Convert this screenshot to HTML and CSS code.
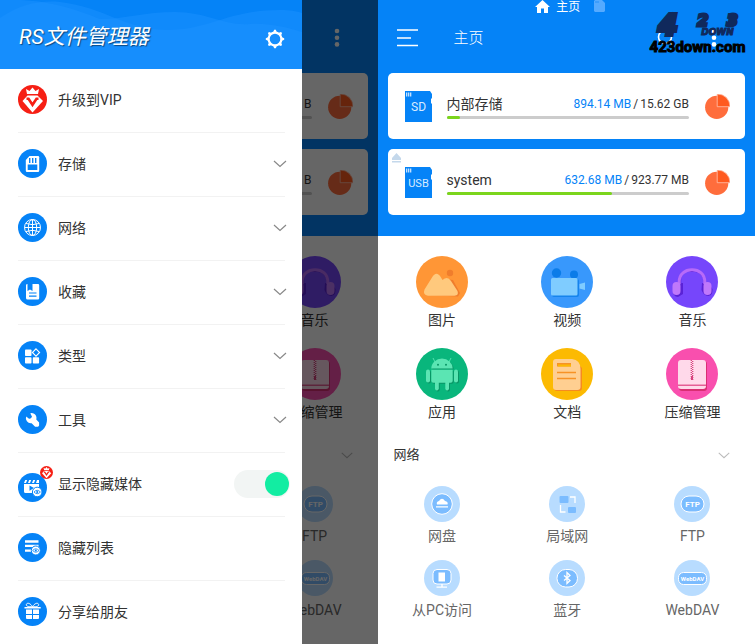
FILE: index.html
```html
<!DOCTYPE html>
<html lang="zh-CN">
<head>
<meta charset="utf-8">
<meta name="viewport" content="width=device-width, initial-scale=1">
<title>RS文件管理器</title>
<link rel="stylesheet" href="styles.css">
</head>
<body>
<svg class="sprite" aria-hidden="true">
  <symbol id="chevron" viewBox="0 0 16 10"><path d="M2 2l6 5.500 6-5.500" fill="none" stroke="currentColor" stroke-width="1.200"/></symbol>
  <symbol id="kebab" viewBox="0 0 6 20"><g fill="currentColor"><circle cx="3" cy="3" r="2.300"/><circle cx="3" cy="9.700" r="2.300"/><circle cx="3" cy="16.400" r="2.300"/></g></symbol>
  <symbol id="pie" viewBox="0 0 25 25"><circle cx="11.700" cy="13.300" r="11.600" fill="#ff6d3c"/><path d="M12.200 0A12.500 12.500 0 0 1 25 12.700H12.200z" fill="#ff5a1f" stroke="#ffc3ae" stroke-width=".8"/></symbol>
  <symbol id="music" viewBox="0 0 52 52"><circle cx="26" cy="26" r="26" fill="#7646fb"/><path d="M14.500 28c-1-17 6-12 12-13 9 0 12 5 12.500 13" fill="none" stroke="#5a22d6" stroke-width="1.500"/><path d="M15.500 27h1.500v11l-5 3c-3 0-5-3-5-5zM36 27l7 1 3.500 5c0 5-1 6-4 7-3 0-6-3-7-6z" fill="#5a22d6"/><path d="M13.200 28v-2C13.200 18 19 13.800 26 13.800S38.800 18 38.800 26v2" fill="none" stroke="#b76bf8" stroke-width="3"/><rect x="6.500" y="26" width="8" height="13" rx="4" fill="#bf78fb"/><rect x="37.500" y="26" width="8" height="13" rx="4" fill="#bf78fb"/></symbol>
  <symbol id="zip" viewBox="0 0 52 52"><circle cx="26" cy="26" r="26" fill="#f94fae"/><rect x="13" y="13" width="28" height="30" rx="3" fill="#d92f73"/><rect x="12" y="12" width="28" height="29" rx="3" fill="#ffd9ea"/><path d="M12 37.200h28" stroke="#df3f80" stroke-width="1.200"/><path d="M25.300 12v20M26.700 13v19" stroke="#d8417d" stroke-width="1.300" stroke-dasharray="1 1"/><path d="M26 28v4" stroke="#d8417d" stroke-width="2"/></symbol>
  <symbol id="vip" viewBox="0 0 29 29"><circle cx="14.500" cy="14.500" r="14.500" fill="#f61f14"/><path d="M9 9L8 4l3.500 2L14.500 2.500l3 3.500L21 4l-1 5z" fill="#fff"/><path d="M9.500 10.500h10L25 16 14.500 27.500 4.500 16z" fill="#fff"/><path d="M8.500 13.800h2l4 6 4-6h2" fill="none" stroke="#f61f14" stroke-width="2.600"/></symbol>
</svg>

<main class="screens">
  <section class="screen screen-drawer">
    <aside class="drawer">
      <header class="drawer-head">
        <svg class="waves" viewBox="0 0 302 69" preserveAspectRatio="none" aria-hidden="true"><path d="M0 18C20 4 42 0 60 2c45 5 65 28 108 28 42 0 60-20 112-20 10 0 16 1 22 3v56H0z"/><path d="M0 0c45-2 75 9 100 19 25 0 45-7 75-7 32 0 48 14 75 12 20-1 35 3 52 8v37H0z"/></svg>
        <h1>RS文件管理器</h1>
        <button class="icon-button" aria-label="设置">
          <svg width="20" height="20" viewBox="0 0 20 20"><circle cx="10" cy="10" r="6.400" fill="none" stroke="#fff" stroke-width="2.200"/><g fill="#fff"><path id="tooth" d="M8 3.500L9.200.8h1.600L12 3.500z"/><use href="#tooth" transform="rotate(45 10 10)"/><use href="#tooth" transform="rotate(90 10 10)"/><use href="#tooth" transform="rotate(135 10 10)"/><use href="#tooth" transform="rotate(180 10 10)"/><use href="#tooth" transform="rotate(225 10 10)"/><use href="#tooth" transform="rotate(270 10 10)"/><use href="#tooth" transform="rotate(315 10 10)"/></g></svg>
        </button>
      </header>
      <ul class="menu">
        <li><button class="menu-row"><svg class="menu-icon" viewBox="0 0 29 29"><use href="#vip"/></svg><span>升级到VIP</span></button></li>
        <li><button class="menu-row"><svg class="menu-icon" viewBox="0 0 29 29"><circle class="disc" cx="14.500" cy="14.500" r="14.500"/><path d="M11.500 7H20a1.200 1.200 0 0 1 1.200 1.200v13.600A1.200 1.200 0 0 1 20 23H9a1.200 1.200 0 0 1-1.200-1.200V11z" fill="#fff"/><path class="disc" d="M11 9h1.400v5H11zM14 9h1.400v5H14zM17 9h1.400v5H17zM9.700 15.500h9.600V21H9.700z"/></svg><span>存储</span><svg class="chevron"><use href="#chevron"/></svg></button></li>
        <li><button class="menu-row"><svg class="menu-icon" viewBox="0 0 29 29"><circle class="disc" cx="14.500" cy="14.500" r="14.500"/><g fill="none" stroke="#fff"><circle cx="14.500" cy="14.500" r="8"/><ellipse cx="14.500" cy="14.500" rx="4.200" ry="8"/><path d="M14.500 6.500v16M6.500 14.500h16M8 10.500q6.500 2.400 13 0M8 18.500q6.500-2.400 13 0"/></g></svg><span>网络</span><svg class="chevron"><use href="#chevron"/></svg></button></li>
        <li><button class="menu-row"><svg class="menu-icon" viewBox="0 0 29 29"><circle class="disc" cx="14.500" cy="14.500" r="14.500"/><path d="M8 8.200Q8 7 9.500 7v7l2.500-1.500 2.500 1.500V7H20q1.200 0 1.200 1.200v13.100q0 1.200-1.200 1.200H9.500Q8 22.500 8 21z" fill="#fff"/><path d="M11 16h7.500M11 19.200h7.500" stroke="#0583f7" stroke-width="1.200"/></svg><span>收藏</span><svg class="chevron"><use href="#chevron"/></svg></button></li>
        <li><button class="menu-row"><svg class="menu-icon" viewBox="0 0 29 29"><circle class="disc" cx="14.500" cy="14.500" r="14.500"/><g fill="#fff"><rect x="7" y="8.500" width="6.500" height="6.500" rx=".8"/><rect x="7" y="16.200" width="6.500" height="6.300" rx=".8"/><rect x="14.800" y="16.200" width="6.300" height="6.300" rx=".8"/></g><path d="M18 7.900l3.600 3.600L18 15.100l-3.600-3.600z" fill="none" stroke="#fff" stroke-width="1.100"/></svg><span>类型</span><svg class="chevron"><use href="#chevron"/></svg></button></li>
        <li><button class="menu-row"><svg class="menu-icon" viewBox="0 0 29 29"><circle class="disc" cx="14.500" cy="14.500" r="14.500"/><path d="M12.300 8.200a5 5 0 0 1 6 6.200l2.800 3.200v3l-1 1.200h-3l-3.500-3.600a5 5 0 0 1-5.400-6.800l2.800 2.300q2 .3 3-2z" fill="#fff"/></svg><span>工具</span><svg class="chevron"><use href="#chevron"/></svg></button></li>
        <li><label class="menu-row"><svg class="menu-icon badged" viewBox="0 0 36 36"><circle class="disc" cx="14.500" cy="21.500" r="14.500"/><path d="M6 17l1.200-3h2L8 17zm4 0l1.200-3h2L12 17zm4 0l1.200-3h2L16 17zm4 0l1-3H21v3zM6 18h15v9H7.500Q6 27 6 25.500z" fill="#fff"/><path class="disc" d="M11.500 19.500l4.500 2.500-4.500 2.700z"/><circle cx="19.200" cy="26" r="4.800" fill="#fff" stroke="#0583f7"/><path d="M16 26q3.200-3.400 6.400 0-3.200 3.400-6.400 0z" fill="none" stroke="#0583f7" stroke-width=".8"/><circle class="disc" cx="19.200" cy="26" r="1"/><use href="#vip" x="22" y="0" width="13" height="13"/></svg><span>显示隐藏媒体</span><input class="switch" type="checkbox" role="switch" checked></label></li>
        <li><button class="menu-row"><svg class="menu-icon" viewBox="0 0 29 29"><circle class="disc" cx="14.500" cy="14.500" r="14.500"/><path d="M7 7.300h13.500v2.500H7zM7 11.700h13.500v2.200H7zM7 16.500h7v2.300H7z" fill="#fff"/><circle cx="17.800" cy="17.500" r="4.500" fill="#fff" stroke="#0583f7"/><path d="M14.600 17.500q3.200-3.400 6.400 0-3.200 3.400-6.400 0z" fill="none" stroke="#0583f7" stroke-width=".8"/><circle class="disc" cx="17.800" cy="17.500" r="1"/></svg><span>隐藏列表</span></button></li>
        <li><button class="menu-row"><svg class="menu-icon" viewBox="0 0 29 29"><circle class="disc" cx="14.500" cy="14.500" r="14.500"/><path d="M14.500 9.800C12 5.500 8.500 5.500 8.300 7.800c0 1.500 2 2 6.200 2 4.200 0 6.200-.5 6.200-2-.2-2.300-3.700-2.300-6.200 2z" fill="none" stroke="#fff"/><path d="M6.500 10h16.200v1.500H6.500zM8 12.500h6V17H8zM15 12.500h6V17h-6zM8 18h6v4H9q-1 0-1-1zM15 18h6v3q0 1-1 1h-5z" fill="#fff"/></svg><span>分享给朋友</span></button></li>
      </ul>
    </aside>

    <div class="peek" aria-hidden="true">
      <div class="hero">
        <div class="toolbar toolbar-end"><svg class="kebab"><use href="#kebab"/></svg></div>
        <div class="cards">
          <div class="card card-cut"><div class="storage"><div class="usage">B</div><div class="track"></div></div><svg class="pie"><use href="#pie"/></svg></div>
          <div class="card card-cut"><div class="storage"><div class="usage">B</div><div class="track"></div></div><svg class="pie"><use href="#pie"/></svg></div>
        </div>
      </div>
      <div class="peek-column">
        <div class="tiles tiles-single">
          <div class="tile"><svg class="tile-icon"><use href="#music"/></svg><span>音乐</span></div>
          <div class="tile"><svg class="tile-icon"><use href="#zip"/></svg><span>压缩管理</span></div>
        </div>
        <div class="section-head section-end"><svg class="chevron small"><use href="#chevron"/></svg></div>
        <div class="links tiles-single">
          <div class="link"><svg class="link-icon" viewBox="0 0 36 36"><circle cx="18" cy="18" r="18" fill="#b8dcff"/><rect x="7" y="10" width="23" height="16" rx="8" fill="#7bbcff" stroke="#fff"/><text x="18.500" y="21" text-anchor="middle" class="glyph-ftp">FTP</text></svg><span>FTP</span></div>
          <div class="link"><svg class="link-icon" viewBox="0 0 36 36"><circle cx="18" cy="18" r="18" fill="#b8dcff"/><rect x="4.500" y="12.500" width="28" height="12" rx="5" fill="#7bbcff" stroke="#fff"/><text x="18.500" y="20.500" text-anchor="middle" class="glyph-dav">WebDAV</text></svg><span>WebDAV</span></div>
        </div>
      </div>
      <div class="scrim"></div>
    </div>
  </section>

  <section class="screen screen-home">
    <header class="hero">
      <nav class="pager">
        <svg width="15" height="14" viewBox="0 0 15 14"><path d="M7.500 0L15 7h-2v6H9V8.500H6V13H2V7H0z" fill="#fff"/></svg>
        <span>主页</span>
        <svg class="pager-sd" width="11" height="12" viewBox="0 0 11 12"><path d="M1 0h7l3 3v8l-1 1H1l-1-1V1z" fill="#55aaff"/><path d="M2 1v2M4 1v2" stroke="#2490f9"/></svg>
      </nav>
      <div class="toolbar">
        <button class="icon-button" aria-label="菜单"><svg width="22" height="18" viewBox="0 0 22 18"><path d="M0 1h21M0 9h14M0 16.500h21" stroke="#fff" stroke-width="1.600"/></svg></button>
        <h2>主页</h2>
        <button class="icon-button search" aria-label="搜索"><svg width="18" height="18" viewBox="0 0 18 18"><circle cx="8" cy="8" r="6.500" fill="none" stroke="#fff" stroke-width="1.600"/><path d="M12.500 12.500l4.500 4.500" stroke="#fff" stroke-width="1.600"/></svg></button>
        <button class="icon-button" aria-label="更多"><svg class="kebab"><use href="#kebab"/></svg></button>
        <div class="watermark"><div class="mark-top"><b>4</b><div><p><i>2</i><i>3</i></p><small>DOWN</small></div></div><strong>423down.com</strong></div>
      </div>
      <div class="cards">
        <article class="card">
          <svg class="disk" viewBox="0 0 27 31"><path d="M0 0h25l2 3v4l-1 1v4l1 1v18H0z" fill="#0583f7"/><path d="M1.700 1.500v4M3.700 1.500v4M5.700 1.500v4" stroke="#d8ebff" stroke-width="1.200"/><text x="13.500" y="19.500" text-anchor="middle" class="glyph-sd">SD</text></svg>
          <div class="storage"><div class="storage-line"><h3>内部存储</h3><p class="usage"><em>894.14 MB</em><span class="slash">/</span>15.62 GB</p></div><progress max="100" value="5.500" aria-label="内部存储"></progress></div>
          <svg class="pie"><use href="#pie"/></svg>
        </article>
        <article class="card">
          <svg class="eject" width="9" height="10" viewBox="0 0 9 10"><path d="M4.500 0L9 5v2H0V5zM0 8h9v1.500H0z" fill="#c4d8eb"/></svg>
          <svg class="disk" viewBox="0 0 27 31"><path d="M0 0h25l2 3v4l-1 1v4l1 1v18H0z" fill="#0583f7"/><path d="M1.700 1.500v4M3.700 1.500v4M5.700 1.500v4" stroke="#d8ebff" stroke-width="1.200"/><text x="13.500" y="20" text-anchor="middle" class="glyph-sd glyph-usb">USB</text></svg>
          <div class="storage"><div class="storage-line"><h3>system</h3><p class="usage"><em>632.68 MB</em><span class="slash">/</span>923.77 MB</p></div><progress max="100" value="68.400" aria-label="system"></progress></div>
          <svg class="pie"><use href="#pie"/></svg>
        </article>
      </div>
    </header>
    <div class="tiles">
      <a class="tile" href="#"><svg class="tile-icon" viewBox="0 0 52 52"><circle cx="26" cy="26" r="26" fill="#ff9636"/><circle cx="34" cy="17" r="3.200" fill="#f07d2c"/><path d="M10 39l32 1.500L44 37l-7-13-8-1z" fill="#f07d2c"/><path d="M8.500 33.500L16 21.500q4.500-7.500 9 0l1.500 2.500q5-4.500 8.500 1L41.500 35Q43 39.500 38.500 39.700H12Q6.500 39 8.500 33.500z" fill="#ffc97d"/></svg><span>图片</span></a>
      <a class="tile" href="#"><svg class="tile-icon" viewBox="0 0 52 52"><circle cx="26" cy="26" r="26" fill="#3898fc"/><circle cx="15.500" cy="17" r="4.700" fill="#0b7ce8"/><circle cx="33" cy="18.500" r="4" fill="#0b7ce8"/><rect x="11" y="23" width="27" height="18" rx="2" fill="#1583ec"/><rect x="10" y="22" width="26.500" height="17.500" rx="1.500" fill="#7fccff"/><path d="M38.500 28l5.500-1.500V34l-5.500-1.500z" fill="#7fccff"/></svg><span>视频</span></a>
      <a class="tile" href="#"><svg class="tile-icon"><use href="#music"/></svg><span>音乐</span></a>
      <a class="tile" href="#"><svg class="tile-icon" viewBox="0 0 52 52"><circle cx="26" cy="26" r="26" fill="#09b67c"/><g fill="#089565" transform="translate(1 1)"><path d="M15.300 20.500a10.700 10 0 0 1 21.400 0zM15.300 21.700h21.400v11q0 2-2 2H33V41q-1.800 3-3.700 0v-6.300h-6.500V41q-2 3-3.800 0v-6.300h-1.700q-2 0-2-2z"/><rect x="10" y="21.500" width="4" height="13" rx="2"/><rect x="38" y="21.500" width="4" height="13" rx="2"/></g><g fill="#5be5b3"><path d="M15.300 20.500a10.700 10 0 0 1 21.400 0zM15.300 21.700h21.400v11q0 2-2 2H33V41q-1.800 3-3.700 0v-6.300h-6.500V41q-2 3-3.800 0v-6.300h-1.700q-2 0-2-2z"/><rect x="10" y="21.500" width="4" height="13" rx="2"/><rect x="38" y="21.500" width="4" height="13" rx="2"/><path d="M19 14l-2-4M33 14l2-4" stroke="#5be5b3" stroke-width=".9"/></g><circle cx="22" cy="16.800" r="1" fill="#089565"/><circle cx="30" cy="16.800" r="1" fill="#089565"/></svg><span>应用</span></a>
      <a class="tile" href="#"><svg class="tile-icon" viewBox="0 0 52 52"><circle cx="26" cy="26" r="26" fill="#fcba02"/><path d="M16 12h17l8 8v20q0 3-3 3H16q-3 0-3-3V15q0-3 3-3z" fill="#f68a20"/><path d="M15 11h16q8.500 1 8.500 10v18q0 3-3 3H15q-3 0-3-3V14q0-3 3-3z" fill="#ffcf91"/><path d="M16 24.500h19M16 30.500h19" stroke="#f79225" stroke-width="1.500"/><path d="M16 15h14v3.500H16z" fill="#f79225"/><path d="M17 16.500h13v2H17z" fill="#fcba02"/></svg><span>文档</span></a>
      <a class="tile" href="#"><svg class="tile-icon"><use href="#zip"/></svg><span>压缩管理</span></a>
    </div>
    <div class="section-head"><h3>网络</h3><svg class="chevron small"><use href="#chevron"/></svg></div>
    <div class="links">
      <a class="link" href="#"><svg class="link-icon" viewBox="0 0 36 36"><circle cx="18" cy="18" r="18" fill="#b8dcff"/><circle cx="18" cy="18" r="10.300" fill="#7bbcff" stroke="#fff"/><path d="M13 18.500q-1-3 2-3.500 3-4.500 6 0 3.500.5 2.500 3.500zM12 20.200h12v1.300H12z" fill="#fff"/></svg><span>网盘</span></a>
      <a class="link" href="#"><svg class="link-icon" viewBox="0 0 36 36"><circle cx="18" cy="18" r="18" fill="#b8dcff"/><rect x="10.500" y="10" width="9" height="7" rx="1" fill="#7bbcff"/><rect x="19" y="21" width="8" height="6" rx="1" fill="#7bbcff"/><path d="M21 11h5v6M11.500 19v7h5" fill="none" stroke="#fff" stroke-width="1.300"/></svg><span>局域网</span></a>
      <a class="link" href="#"><svg class="link-icon" viewBox="0 0 36 36"><circle cx="18" cy="18" r="18" fill="#b8dcff"/><rect x="7" y="10" width="23" height="16" rx="8" fill="#7bbcff" stroke="#fff"/><text x="18.500" y="21" text-anchor="middle" class="glyph-ftp">FTP</text></svg><span>FTP</span></a>
      <a class="link" href="#"><svg class="link-icon" viewBox="0 0 36 36"><circle cx="18" cy="18" r="18" fill="#b8dcff"/><rect x="9" y="9.500" width="18" height="14.500" rx="4" fill="#7bbcff" stroke="#fff"/><path d="M14.500 12.500h6.500v9h-6.500zM17.300 24h1.400v2.500h4.300v1.200H12.500v-1.200h4.800z" fill="#fff"/></svg><span>从PC访问</span></a>
      <a class="link" href="#"><svg class="link-icon" viewBox="0 0 36 36"><circle cx="18" cy="18" r="18" fill="#b8dcff"/><rect x="8" y="9.500" width="20.500" height="17.500" rx="8.500" fill="#7bbcff" stroke="#fff"/><path d="M15 15.500l6 5-3 3V12.500l3 3-6 5" fill="none" stroke="#fff" stroke-width="1.300"/></svg><span>蓝牙</span></a>
      <a class="link" href="#"><svg class="link-icon" viewBox="0 0 36 36"><circle cx="18" cy="18" r="18" fill="#b8dcff"/><rect x="4.500" y="12.500" width="28" height="12" rx="5" fill="#7bbcff" stroke="#fff"/><text x="18.500" y="20.500" text-anchor="middle" class="glyph-dav">WebDAV</text></svg><span>WebDAV</span></a>
    </div>
  </section>
</main>
</body>
</html>
```
FILE: styles.css
```css
* { box-sizing: border-box; }

body {
  margin: 0;
  background: #fff;
  color: #333;
  font: 14px/20px Roboto, "Noto Sans CJK SC", sans-serif;
}

h1, h2, h3, p, ul { margin: 0; padding: 0; font-weight: 400; }
ul { list-style: none; }
a { color: inherit; text-decoration: none; }
svg { display: block; flex: none; }

button {
  padding: 0;
  border: 0;
  background: none;
  color: inherit;
  font: inherit;
  text-align: left;
}

.sprite { position: absolute; width: 0; height: 0; }
.disc { fill: #0583f7; }

.screens {
  display: grid;
  grid-template-columns: 1fr 1fr;
  min-height: 100vh;
}
.screen { min-width: 0; }
.screen-drawer { display: flex; }

/* Drawer */
.drawer { width: 80%; background: #fff; }

.drawer-head {
  position: relative;
  display: flex;
  align-items: center;
  justify-content: space-between;
  height: 69px;
  padding: 8px 17px 0 19px;
  overflow: hidden;
  background: #0583f7;
  color: #fff;
}
.drawer-head > * { position: relative; }
.drawer-head .waves {
  position: absolute;
  inset: 0;
  width: 100%;
  height: 100%;
  fill: #1b91ff;
  fill-opacity: 0.5;
}
h1 {
  font-size: 21px;
  line-height: 28px;
  font-style: italic;
  text-shadow: 1px 1px 1px rgba(0, 0, 0, 0.5);
  margin-bottom: 4px;
}

.menu li { margin: 0 17px 0 18px; border-bottom: 1px solid #f2f2f2; }
.menu li:last-child { border-bottom: 0; }
.menu-row {
  display: flex;
  align-items: center;
  width: 100%;
  height: 63px;
  padding-bottom: 2px;
}
.menu-row span { flex: 1; }
.menu-icon { width: 29px; height: 29px; margin-right: 11px; }
.menu-icon.badged { width: 36px; height: 36px; margin-right: 4px; }

.chevron { width: 16px; height: 10px; margin-right: -3px; color: #888; }
.chevron.small { width: 14px; height: 9px; margin: 0; color: #bbb; }

.switch {
  appearance: none;
  flex: none;
  width: 56px;
  height: 28px;
  margin: 0 -5px 0 0;
  padding: 2px 1px;
  border-radius: 14px;
  background: #f2f5f4;
}
.switch::before {
  content: "";
  display: block;
  width: 24px;
  height: 24px;
  border-radius: 50%;
  background: #12eda2;
}
.switch:checked::before { margin-left: auto; }

/* Home page strip beside the drawer */
.peek { position: relative; width: 20%; overflow: hidden; }
.peek .hero { padding-top: 14px; }
.peek-column {
  width: 166.67%;
  margin-left: -66.67%;
}
.scrim { position: absolute; inset: 0; background: rgba(0, 0, 0, 0.6); }

/* Home header */
.hero { background: #0583f7; color: #fff; padding-bottom: 21px; }
.pager {
  display: flex;
  justify-content: center;
  gap: 6px;
  height: 14px;
  padding-left: 8px;
  font-size: 12px;
  line-height: 14px;
}
.pager-sd { margin-left: 8px; }
.toolbar {
  position: relative;
  display: flex;
  align-items: center;
  height: 48px;
  margin-bottom: 11px;
  padding: 0 38px 0 19px;
}
.toolbar-end { justify-content: flex-end; }
.toolbar h2 { flex: 1; margin-left: 35px; font-size: 15px; font-weight: 300; }
.search { margin-right: 36px; }
.kebab { width: 6px; height: 20px; color: #fff; }

.watermark {
  position: absolute;
  top: 0;
  right: 8px;
  width: 99px;
  color: #000;
  text-align: center;
}
.mark-top {
  display: flex;
  height: 23px;
  color: #10295c;
  font-family: "DejaVu Sans", sans-serif;
  font-style: italic;
}
.mark-top b {
  width: 40px;
  font-size: 28px;
  line-height: 23px;
  -webkit-text-stroke: 4px #10295c;
}
.mark-top div { flex: 1; }
.mark-top p { display: flex; justify-content: space-around; }
.mark-top i {
  font-size: 16px;
  line-height: 14px;
  font-weight: 700;
  -webkit-text-stroke: 3px #10295c;
}
.mark-top small {
  display: block;
  font-size: 9px;
  line-height: 9px;
  font-weight: 700;
  -webkit-text-stroke: 1px #10295c;
}
.watermark strong {
  display: block;
  font-size: 15px;
  line-height: 21px;
  -webkit-text-stroke: 1px #000;
}

/* Storage cards */
.cards {
  display: grid;
  grid-template-columns: minmax(0, 1fr);
  gap: 10px;
  padding: 0 10px;
}
.card {
  position: relative;
  display: flex;
  align-items: center;
  height: 66px;
  padding: 0 15px 0 17px;
  border-radius: 5px;
  background: #fff;
  color: #333;
}
.disk { width: 27px; height: 31px; margin-right: 15px; }
.pie { width: 25px; height: 25px; margin-left: 16px; }
.storage { flex: 1; min-width: 0; }
.storage-line { display: flex; justify-content: space-between; }
.storage h3 { font-size: 14px; }
.usage { font-size: 12px; }
.usage em { color: #0583f7; font-style: normal; }
.slash { margin: 0 2px; }
.eject { position: absolute; top: 4px; left: 4px; }

progress {
  appearance: none;
  display: block;
  width: 100%;
  height: 3px;
  margin-top: 2px;
  border: 0;
}
progress::-webkit-progress-bar { border-radius: 2px; background: #ccc; }
progress::-webkit-progress-value { border-radius: 2px; background: #7bd51c; }

.peek .cards { padding-left: 0; }
.card-cut { padding-left: 0; border-radius: 0 5px 5px 0; }
.card-cut .usage { text-align: right; }
.track { height: 3px; margin-top: 2px; border-radius: 0 2px 2px 0; background: #ccc; }

/* Shortcuts */
.tiles, .links {
  display: grid;
  grid-template-columns: repeat(3, 1fr);
  padding-left: 2px;
  text-align: center;
}
.tiles { gap: 18px 0; padding-top: 20px; }
.links { gap: 14px 0; color: #666; }
.tiles-single { grid-template-columns: 1fr; padding-left: 0; }
.tile, .link { display: flex; flex-direction: column; align-items: center; }
.tile { gap: 2px; }
.link { gap: 4px; }
.tile-icon { width: 52px; height: 52px; }
.link-icon { width: 36px; height: 36px; }

.section-head {
  display: flex;
  align-items: center;
  justify-content: space-between;
  height: 20px;
  margin: 23px 24px 21px 16px;
}
.section-head h3 { font-size: 13px; }
.section-end { justify-content: flex-end; }

.glyph-ftp, .glyph-dav { fill: #fff; font-family: Roboto, sans-serif; font-weight: 700; }
.glyph-ftp { font-size: 8px; }
.glyph-dav { font-size: 6px; }
.glyph-sd { fill: #d8ebff; font: 12px Roboto, sans-serif; }
.glyph-usb { font-size: 11px; }
```
